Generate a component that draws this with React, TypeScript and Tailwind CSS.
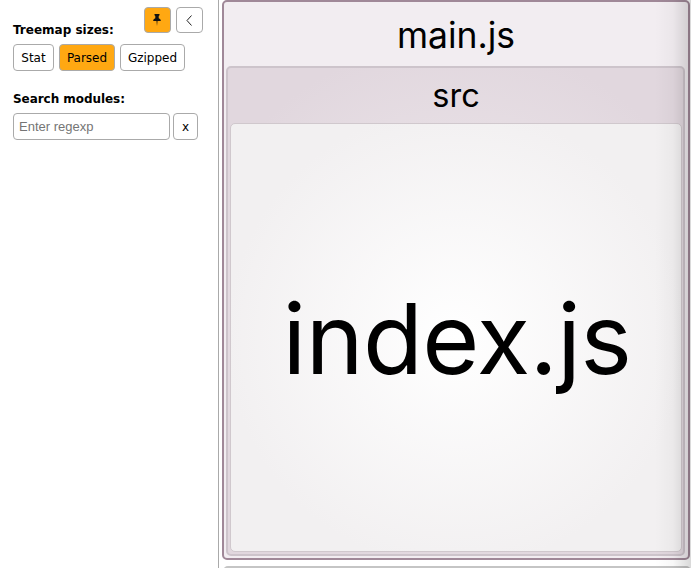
import React from 'react';

const button =
  'flex h-[27px] shrink-0 items-center justify-center rounded border border-[#aaa] text-[12px] leading-none text-black';

function PinIcon() {
  return (
    <svg width="8" height="12" viewBox="0 0 8 12" fill="#111">
      <path d="M1.500 0h5v1.200l-.8.7v2.400C7 4.800 7.800 5.600 7.800 7H4.500L4 12 3.500 7H.2C.2 5.600 1 4.800 2.300 4.300V1.900l-.8-.7z" />
    </svg>
  );
}

function ChevronIcon() {
  return (
    <svg width="7" height="11" viewBox="0 0 7 11" fill="none" stroke="#222" strokeWidth="1">
      <path d="M5.500.5L1 5.500l4.500 5" />
    </svg>
  );
}

function Sidebar() {
  return (
    <aside className="relative h-full w-[219px] shrink-0 border-r border-[#aaa] pl-[13px] pt-[23px] font-['DejaVu_Sans',sans-serif] text-[12px] text-black">
      <div className="absolute left-[144px] top-[7px] flex gap-[5px]">
        <button className={`${button} w-[27px] !h-[26px] bg-[#ffa812] pr-px`}>
          <PinIcon />
        </button>
        <button className={`${button} w-[27px] !h-[26px] bg-white pr-px`}>
          <ChevronIcon />
        </button>
      </div>
      <h2 className="h-[21px] whitespace-nowrap text-[12px] font-bold leading-[15px]">Treemap sizes:</h2>
      <div className="flex gap-[5px]">
        <button className={`${button} w-[41px] bg-white`}>Stat</button>
        <button className={`${button} w-[56px] bg-[#ffa812]`}>Parsed</button>
        <button className={`${button} w-[65px] bg-white`}>Gzipped</button>
      </div>
      <h2 className="mt-[21px] h-[21px] whitespace-nowrap text-[12px] font-bold leading-[15px] tracking-[-0.05px]">Search modules:</h2>
      <div className="flex gap-[3px]">
        <input
          placeholder="Enter regexp"
          className="h-[27px] w-[157px] rounded border border-[#aaa] bg-white px-[5px] font-['Liberation_Sans',Arial,sans-serif] text-[13px] placeholder:text-[#757575]"
        />
        <button className={`${button} w-[25px] bg-white`}>x</button>
      </div>
    </aside>
  );
}

function Treemap() {
  return (
    <main className="relative h-full flex-1 overflow-hidden bg-white pl-[3px] font-['Inter',sans-serif] text-black">
      <div className="flex h-[560px] w-[468px] flex-col rounded-[5px] border-2 border-[#a08898] bg-[#f2edf1] pb-[2px] pl-[2px] pr-[3px]">
        <div className="flex h-[64px] shrink-0 items-center justify-center pl-px pt-[3px] text-[35.5px]">
          <span>main.js</span>
        </div>
        <div className="flex min-h-0 flex-1 flex-col rounded-[5px] border-2 border-[#cdc4cb] bg-[radial-gradient(circle_at_center,#f0eaee,#e1d7de_270px)] pb-[2px] pl-[2px] pr-px">
          <div className="flex h-[55px] shrink-0 items-center justify-center pt-[2px] text-[32.5px]">
            <span>src</span>
          </div>
          <div className="flex min-h-0 flex-1 items-center justify-center rounded-[5px] border border-[#d0c8cd] bg-[radial-gradient(circle_at_center,#ffffff,#f2f0f1_230px)] pl-[2px] pt-[2px] text-[98px] tracking-[-0.6px]">
            <span>index.js</span>
          </div>
        </div>
      </div>
      <div className="ml-px mt-[6px] h-4 rounded-t-[5px] border-t-2 border-[#c5c5c5] bg-[#ccc]" />
      <div className="pointer-events-none absolute inset-y-0 right-0 w-[36px] bg-gradient-to-r from-transparent via-black/[0.03] to-black/[0.15]" />
    </main>
  );
}

export default function App() {
  return (
    <div className="flex h-[568px] w-[691px] overflow-hidden bg-white">
      <Sidebar />
      <Treemap />
    </div>
  );
}
